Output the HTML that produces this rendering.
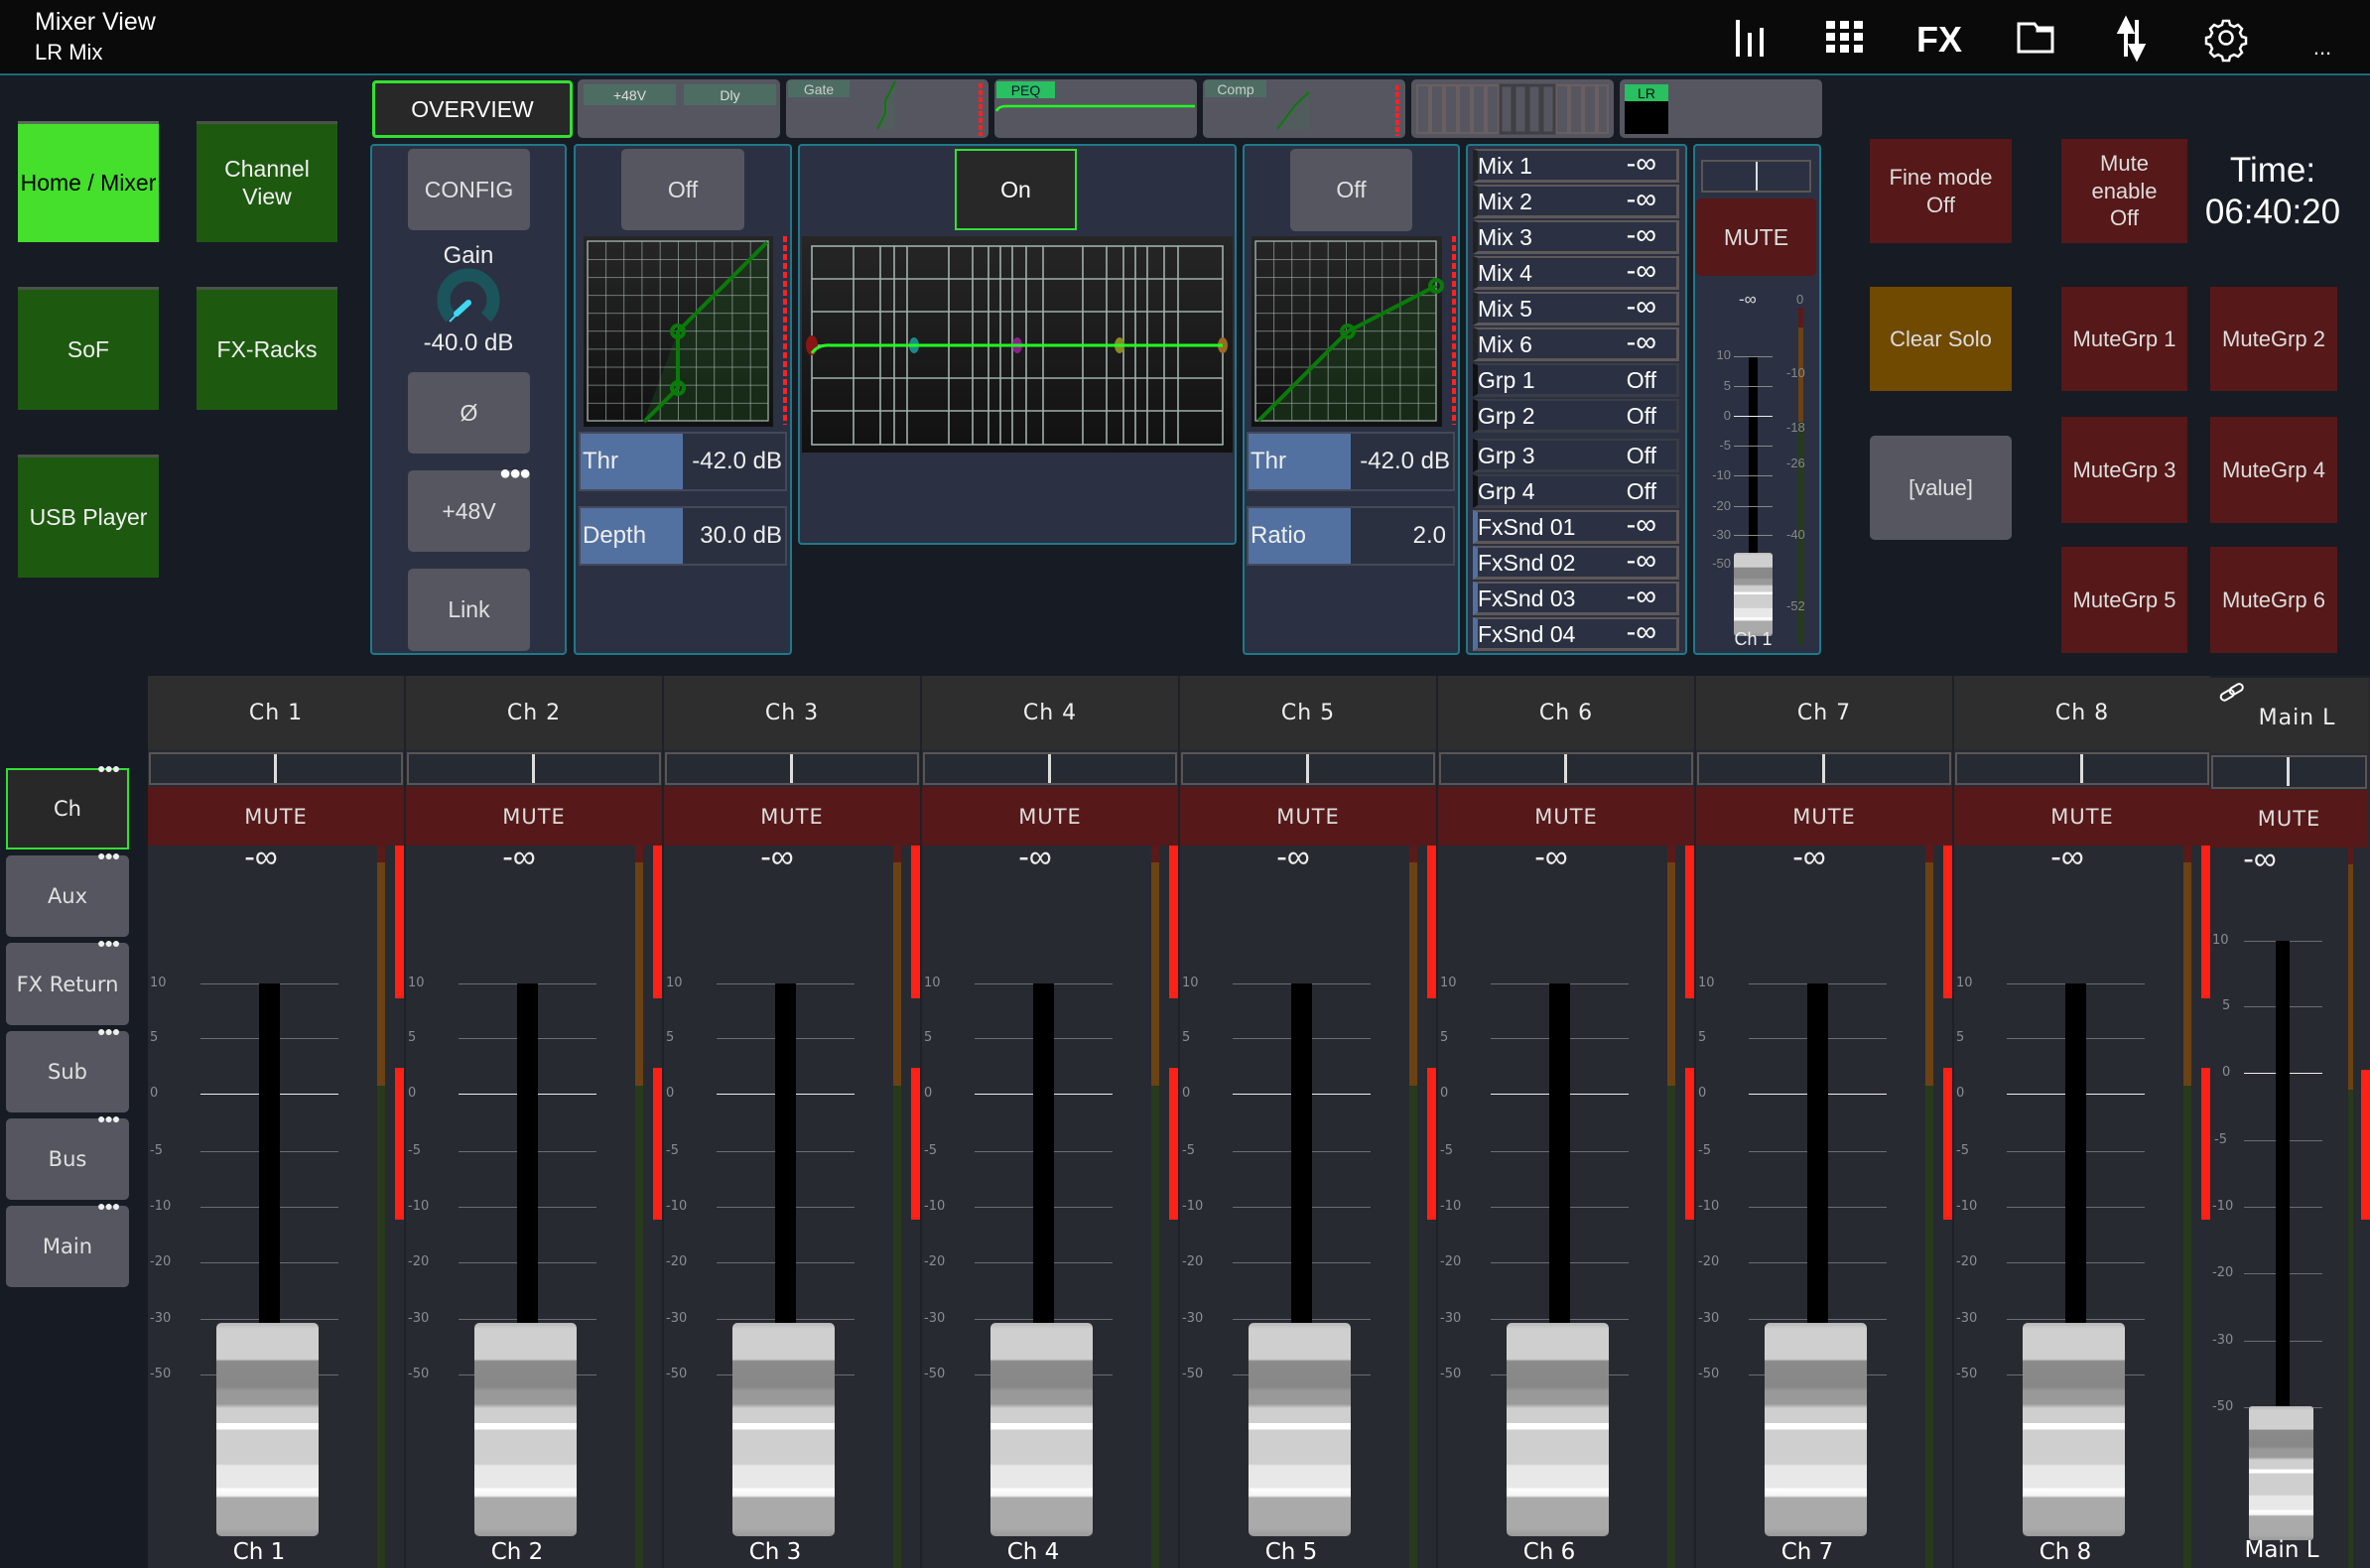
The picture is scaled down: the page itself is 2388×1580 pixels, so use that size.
<!DOCTYPE html>
<html><head><meta charset="utf-8">
<style>
*{margin:0;padding:0;box-sizing:border-box}
body{width:2388px;height:1580px;background:#171b24;overflow:hidden;position:relative;font-family:"Liberation Sans",sans-serif;color:#eee}
.a{position:absolute}
.c{display:flex;align-items:center;justify-content:center;text-align:center}
.nav{background:#1d5a10;border-top:3px solid #4a5248;font-size:23px;color:#f0f0f0;line-height:1.2}
.tile{background:#565661;border-radius:5px}
.pnl{background:#2b3142;border:2px solid #1d7a8a;border-radius:4px}
.btn{background:#565661;border-radius:5px;font-size:23px;color:#e0e0e0}
.red{background:#561818;color:#ddd;font-size:22px;line-height:1.25}
.row{left:1484px;width:208px;height:34px;border:3px solid #5e5858;border-top-width:2px;background:#2b3142;font-size:23px;color:#fff}
.row span{position:absolute;top:2px}
.row .l{left:0}.row .r{right:20px;top:-3px;font-size:29px}
.strip{position:absolute;top:681px;width:258px;height:899px;background:#272a31}
.hd{position:absolute;left:0;top:0;width:258px;height:74px;background:#2e2e2e;font-family:"DejaVu Sans",sans-serif;font-size:22px;display:flex;align-items:center;justify-content:center;letter-spacing:1px}
.pan{position:absolute;left:1px;top:77px;width:256px;height:33px;border:2px solid #5a5555;background:#262a32}
.pan i{position:absolute;left:124px;top:0;width:3px;height:29px;background:#ddd}
.mu{position:absolute;left:0;top:112px;width:258px;height:59px;background:#561818;color:#ddd;font-family:"DejaVu Sans",sans-serif;font-size:21px;letter-spacing:1px;display:flex;align-items:center;justify-content:center}
.inf{position:absolute;left:74px;top:164px;width:80px;text-align:center;font-family:"Liberation Sans",sans-serif;font-size:32px;line-height:36px;color:#eee}
.sl{position:absolute;left:53px;width:139px;height:1px;background:#6a6d74}
.sl.z{background:#eee}
.lb{position:absolute;left:2px;width:30px;font-family:"DejaVu Sans",sans-serif;font-size:13px;color:#8a8d94}
.trk{position:absolute;left:112px;top:310px;width:21px;height:344px;background:#000}
.cap{position:absolute;left:69px;top:652px;width:103px;height:215px;border-radius:5px;background:linear-gradient(#b8b8b8 0,#cfcfcf 3%,#cfcfcf 17%,#8a8a8a 18%,#888 30%,#999 32%,#999 38%,#cfcfcf 40%,#cfcfcf 47%,#fff 47%,#fff 50%,#cfcfcf 50%,#cfcfcf 66%,#e8e8e8 67%,#e8e8e8 77%,#fff 78%,#f4f4f4 81%,#aaa 82%,#aaa 96%,#999 100%)}
.nm{position:absolute;left:42px;top:870px;width:140px;text-align:center;font-family:"DejaVu Sans",sans-serif;font-size:23px;color:#fff}
.m1{position:absolute;left:231px;width:8px}
.rb{position:absolute;left:249px;width:9px;background:#ff2016}
</style></head><body>

<div class="a" style="left:0;top:0;width:2388px;height:76px;background:#0a0a0a;border-bottom:2px solid #1a6a78"></div>
<div class="a" style="left:35px;top:8px;font-size:25px;color:#fff">Mixer View</div>
<div class="a" style="left:35px;top:40px;font-size:22px;color:#fff">LR Mix</div>
<svg class="a" style="left:1740px;top:14px" width="640" height="50" viewBox="1740 14 640 50">
 <g fill="#fff">
  <rect x="1749" y="20" width="4" height="37"/><rect x="1761" y="33" width="4" height="24"/><rect x="1773" y="28" width="4" height="29"/>
  <rect x="1840" y="21" width="9" height="8"/><rect x="1854" y="21" width="9" height="8"/><rect x="1868" y="21" width="9" height="8"/>
  <rect x="1840" y="33" width="9" height="8"/><rect x="1854" y="33" width="9" height="8"/><rect x="1868" y="33" width="9" height="8"/>
  <rect x="1840" y="45" width="9" height="8"/><rect x="1854" y="45" width="9" height="8"/><rect x="1868" y="45" width="9" height="8"/>
  <text x="1954" y="52" font-family="Liberation Sans" font-weight="bold" font-size="36" text-anchor="middle">FX</text>
  <text x="2340" y="55" font-family="Liberation Sans" font-size="22" text-anchor="middle">...</text>
 </g>
 <path d="M2034 24h16l3 4h15v24h-34z M2053 28v3h15" fill="none" stroke="#fff" stroke-width="3"/>
 <path d="M2142 57V24 M2136 32l6-12 6 12z M2153 20v33 M2147 46l6 12 6-12z" stroke="#fff" stroke-width="4" fill="#fff"/>
 <g transform="translate(2243 38)" fill="none" stroke="#fff" stroke-width="2.5">
  <circle r="6.5"/>
  <path d="M-3 -17h6l1 4 4 2 4-2 4 4-2 4 2 4 4 1v6l-4 1-2 4 2 4-4 4-4-2-4 2-1 4h-6l-1-4-4-2-4 2-4-4 2-4-2-4-4-1v-6l4-1 2-4-2-4 4-4 4 2 4-2z"/>
 </g>
</svg>

<div class="a c nav" style="left:18px;top:122px;width:142px;height:122px;background:#44e02c;color:#000;border-top-color:#5a6a58">Home / Mixer</div>
<div class="a c nav" style="left:198px;top:122px;width:142px;height:122px">Channel<br>View</div>
<div class="a c nav" style="left:18px;top:289px;width:142px;height:124px">SoF</div>
<div class="a c nav" style="left:198px;top:289px;width:142px;height:124px">FX-Racks</div>
<div class="a c nav" style="left:18px;top:458px;width:142px;height:124px">USB Player</div>

<div class="a c" style="left:375px;top:81px;width:202px;height:58px;background:#282828;border:3px solid #33e033;border-radius:4px;font-size:23px;color:#fff">OVERVIEW</div>
<div class="a tile" style="left:582px;top:80px;width:204px;height:59px"></div>
<div class="a c" style="left:588px;top:85px;width:93px;height:21px;background:#4d6d63;font-size:14px;color:#ddd">+48V</div>
<div class="a c" style="left:689px;top:85px;width:93px;height:21px;background:#4d6d63;font-size:14px;color:#ddd">Dly</div>
<div class="a tile" style="left:792px;top:80px;width:204px;height:59px"></div>
<div class="a c" style="left:794px;top:81px;width:62px;height:17px;background:#4d6d63;font-size:14px;color:#ccc">Gate</div>
<svg class="a" style="left:792px;top:80px" width="204" height="59"><path d="M100 22l10-20v48h-18z" fill="#4a6a58" opacity=".4"/><path d="M92 50l8-16v-12l10-20" stroke="#0a7a0a" stroke-width="2" fill="none"/><line x1="196" y1="4" x2="196" y2="57" stroke="#f22" stroke-width="4" stroke-dasharray="5 2"/></svg>
<div class="a tile" style="left:1002px;top:80px;width:204px;height:59px"></div>
<div class="a c" style="left:1004px;top:82px;width:59px;height:17px;background:#28c060;font-size:14px;color:#113">PEQ</div>
<svg class="a" style="left:1002px;top:80px" width="204" height="59"><path d="M2 32q2-5 10-5h190" stroke="#2f2" stroke-width="2.5" fill="none"/></svg>
<div class="a tile" style="left:1212px;top:80px;width:204px;height:59px"></div>
<div class="a c" style="left:1214px;top:81px;width:62px;height:17px;background:#4d6d63;font-size:14px;color:#ccc">Comp</div>
<svg class="a" style="left:1212px;top:80px" width="204" height="59"><path d="M75 50l18-24 14-13v37h-32z" fill="#4a6a58" opacity=".4"/><path d="M75 50l18-24 14-13" stroke="#0a7a0a" stroke-width="2" fill="none"/><line x1="196" y1="6" x2="196" y2="57" stroke="#f22" stroke-width="4" stroke-dasharray="5 2"/></svg>
<div class="a tile" style="left:1422px;top:80px;width:204px;height:59px"></div>
<svg class="a" style="left:1422px;top:80px" width="204" height="59">
 <g fill="none" stroke-width="2">
 <g stroke="#6a5f5f"><rect x="6" y="6" width="12" height="48"/><rect x="20" y="6" width="12" height="48"/><rect x="34" y="6" width="12" height="48"/><rect x="48" y="6" width="12" height="48"/><rect x="62" y="6" width="12" height="48"/><rect x="76" y="6" width="12" height="48"/><rect x="146" y="6" width="12" height="48"/><rect x="160" y="6" width="12" height="48"/><rect x="174" y="6" width="12" height="48"/><rect x="188" y="6" width="10" height="48"/></g>
 <g stroke="#3f3f44" stroke-width="3"><rect x="90" y="6" width="12" height="48"/><rect x="104" y="6" width="12" height="48"/><rect x="118" y="6" width="12" height="48"/><rect x="132" y="6" width="12" height="48"/></g>
 </g></svg>
<div class="a tile" style="left:1632px;top:80px;width:204px;height:59px"></div>
<div class="a c" style="left:1637px;top:85px;width:44px;height:17px;background:#28c060;font-size:14px;color:#111">LR</div>
<div class="a" style="left:1637px;top:102px;width:44px;height:33px;background:#000"></div>

<div class="a pnl" style="left:373px;top:145px;width:198px;height:515px"></div>
<div class="a c btn" style="left:411px;top:150px;width:123px;height:82px">CONFIG</div>
<div class="a" style="left:373px;top:244px;width:198px;text-align:center;font-size:24px">Gain</div>
<svg class="a" style="left:440px;top:270px" width="64" height="64" viewBox="-32 -32 64 64"><path d="M-17.7 17.7A25 25 0 1 1 17.7 17.7" fill="none" stroke="#1c545c" stroke-width="13"/><line x1="-19" y1="22" x2="1" y2="2" stroke="#3fd8f0" stroke-width="2"/><line x1="-12" y1="14" x2="0" y2="3" stroke="#3fd8f0" stroke-width="6" stroke-linecap="round"/></svg>
<div class="a" style="left:373px;top:332px;width:198px;text-align:center;font-size:24px">-40.0 dB</div>
<div class="a c btn" style="left:411px;top:375px;width:123px;height:82px">Ø</div>
<div class="a c btn" style="left:411px;top:474px;width:123px;height:82px">+48V</div>
<div class="a" style="left:503px;top:466px;font-size:20px;color:#fff;letter-spacing:-2px">●●●</div>
<div class="a c btn" style="left:411px;top:573px;width:123px;height:83px">Link</div>

<div class="a pnl" style="left:578px;top:145px;width:220px;height:515px"></div>
<div class="a c btn" style="left:626px;top:150px;width:124px;height:82px">Off</div>
<svg class="a" style="left:588px;top:238px" width="210" height="192">
 <defs><pattern id="g1" width="18.2" height="18.1" patternUnits="userSpaceOnUse" x="4" y="5"><path d="M0 0H18.2M0 0V18.1" stroke="#9fb0aa" stroke-width="1.3" fill="none"/></pattern>
 <linearGradient id="bg1" x1="0" y1="0" x2="0" y2="1"><stop offset="0" stop-color="#262626"/><stop offset="1" stop-color="#111"/></linearGradient></defs>
 <rect width="191" height="192" fill="url(#bg1)"/>
 <path d="M95 96L185 6V186H61z" fill="#1a3a1a" opacity=".6"/>
 <rect x="4" y="5" width="182" height="181" fill="url(#g1)" stroke="#9fb0aa" stroke-width="1.3"/>
 <path d="M61 187L95 153V96L185 6" stroke="#0a7a0a" stroke-width="4" fill="none"/>
 <circle cx="95" cy="96" r="6" fill="none" stroke="#0a7a0a" stroke-width="4"/><circle cx="95" cy="153" r="6" fill="none" stroke="#0a7a0a" stroke-width="4"/>
 <line x1="203" y1="0" x2="203" y2="190" stroke="#f22" stroke-width="4" stroke-dasharray="6 3"/>
</svg>
<div class="a" style="left:583px;top:435px;width:210px;height:60px;border:2px solid #44495a;background:#2a3040"></div>
<div class="a" style="left:585px;top:437px;width:103px;height:56px;background:#5271a0;font-size:24px;padding:14px 2px">Thr</div>
<div class="a" style="left:688px;top:451px;width:100px;text-align:right;font-size:24px">-42.0 dB</div>
<div class="a" style="left:583px;top:510px;width:210px;height:60px;border:2px solid #44495a;background:#2a3040"></div>
<div class="a" style="left:585px;top:512px;width:103px;height:56px;background:#5271a0;font-size:24px;padding:14px 2px">Depth</div>
<div class="a" style="left:688px;top:526px;width:100px;text-align:right;font-size:24px">30.0 dB</div>

<div class="a pnl" style="left:804px;top:145px;width:442px;height:404px"></div>
<div class="a c" style="left:962px;top:150px;width:123px;height:82px;background:#282828;border:2px solid #33e033;font-size:23px;color:#fff">On</div>
<svg class="a" style="left:808px;top:238px" width="434" height="218">
 <defs><linearGradient id="bg2" x1="0" y1="0" x2="0" y2="1"><stop offset="0" stop-color="#262626"/><stop offset="1" stop-color="#111"/></linearGradient></defs>
 <rect width="434" height="218" fill="url(#bg2)"/>
 <g stroke="#9fb0aa" stroke-width="1.6" fill="none">
 <rect x="10" y="10" width="414" height="200"/>
 <path d="M10 43H424M10 76H424M10 110H424M10 143H424M10 176H424"/>
 <path d="M52 10V210M79 10V210M93 10V210M106 10V210M148 10V210M172 10V210M188 10V210M200 10V210M212 10V210M226 10V210M243 10V210M283 10V210M307 10V210M324 10V210M336 10V210M348 10V210M365 10V210M379 10V210"/>
 </g>
 <ellipse cx="10" cy="110" rx="6" ry="10" fill="#8a1515"/>
 <ellipse cx="113" cy="110" rx="5" ry="8" fill="#1a8a8a"/>
 <ellipse cx="217" cy="110" rx="5" ry="8" fill="#8a208a"/>
 <ellipse cx="320" cy="110" rx="5" ry="8" fill="#8a8a20"/>
 <ellipse cx="424" cy="110" rx="5" ry="8" fill="#9a6a20"/>
 <path d="M10 118Q16 109 30 110H424" stroke="#2f2" stroke-width="3" fill="none"/>
</svg>

<div class="a pnl" style="left:1252px;top:145px;width:219px;height:515px"></div>
<div class="a c btn" style="left:1300px;top:150px;width:123px;height:83px">Off</div>
<svg class="a" style="left:1261px;top:238px" width="210" height="192">
 <defs><pattern id="g2" width="18.2" height="18.1" patternUnits="userSpaceOnUse" x="4" y="5"><path d="M0 0H18.2M0 0V18.1" stroke="#9fb0aa" stroke-width="1.3" fill="none"/></pattern></defs>
 <rect width="192" height="192" fill="url(#bg1)"/>
 <path d="M97 96L186 50V186H7z" fill="#1a3a1a" opacity=".6"/>
 <rect x="4" y="5" width="182" height="181" fill="url(#g2)" stroke="#9fb0aa" stroke-width="1.3"/>
 <path d="M7 186L97 96L186 50" stroke="#0a7a0a" stroke-width="4" fill="none"/>
 <circle cx="97" cy="96" r="6" fill="none" stroke="#0a7a0a" stroke-width="4"/><circle cx="186" cy="50" r="6" fill="none" stroke="#0a7a0a" stroke-width="4"/>
 <line x1="204" y1="0" x2="204" y2="190" stroke="#f22" stroke-width="4" stroke-dasharray="6 3"/>
</svg>
<div class="a" style="left:1256px;top:435px;width:210px;height:60px;border:2px solid #44495a;background:#2a3040"></div>
<div class="a" style="left:1258px;top:437px;width:103px;height:56px;background:#5271a0;font-size:24px;padding:14px 2px">Thr</div>
<div class="a" style="left:1361px;top:451px;width:100px;text-align:right;font-size:24px">-42.0 dB</div>
<div class="a" style="left:1256px;top:510px;width:210px;height:60px;border:2px solid #44495a;background:#2a3040"></div>
<div class="a" style="left:1258px;top:512px;width:103px;height:56px;background:#5271a0;font-size:24px;padding:14px 2px">Ratio</div>
<div class="a" style="left:1361px;top:526px;width:96px;text-align:right;font-size:24px">2.0</div>

<div class="a pnl" style="left:1477px;top:145px;width:223px;height:515px"></div>
<div class="a row" style="top:150px;border-left:5px solid #222"><span class="l">Mix 1</span><span class="r">-∞</span></div>
<div class="a row" style="top:186px;border-left:5px solid #222"><span class="l">Mix 2</span><span class="r">-∞</span></div>
<div class="a row" style="top:222px;border-left:5px solid #222"><span class="l">Mix 3</span><span class="r">-∞</span></div>
<div class="a row" style="top:258px;border-left:5px solid #222"><span class="l">Mix 4</span><span class="r">-∞</span></div>
<div class="a row" style="top:294px;border-left:5px solid #222"><span class="l">Mix 5</span><span class="r">-∞</span></div>
<div class="a row" style="top:330px;border-left:5px solid #222"><span class="l">Mix 6</span><span class="r">-∞</span></div>
<div class="a row" style="top:366px;border-color:#3a3d45;border-left:5px solid #111"><span class="l">Grp 1</span><span class="r" style="font-size:23px;top:2px">Off</span></div>
<div class="a row" style="top:402px;border-color:#3a3d45;border-left:5px solid #111"><span class="l">Grp 2</span><span class="r" style="font-size:23px;top:2px">Off</span></div>
<div class="a row" style="top:442px;border-color:#3a3d45;border-left:5px solid #111"><span class="l">Grp 3</span><span class="r" style="font-size:23px;top:2px">Off</span></div>
<div class="a row" style="top:478px;border-color:#3a3d45;border-left:5px solid #111"><span class="l">Grp 4</span><span class="r" style="font-size:23px;top:2px">Off</span></div>
<div class="a row" style="top:514px;border-left:5px solid #5271a0"><span class="l">FxSnd 01</span><span class="r">-∞</span></div>
<div class="a row" style="top:550px;border-left:5px solid #5271a0"><span class="l">FxSnd 02</span><span class="r">-∞</span></div>
<div class="a row" style="top:586px;border-left:5px solid #5271a0"><span class="l">FxSnd 03</span><span class="r">-∞</span></div>
<div class="a row" style="top:622px;border-left:5px solid #5271a0"><span class="l">FxSnd 04</span><span class="r">-∞</span></div>

<div class="a pnl" style="left:1706px;top:145px;width:129px;height:515px"></div>
<div class="a" style="left:1714px;top:161px;width:111px;height:33px;border:2px solid #5a5555"></div>
<div class="a" style="left:1769px;top:163px;width:2px;height:29px;background:#ddd"></div>
<div class="a c red" style="left:1709px;top:200px;width:121px;height:78px;border-radius:5px;font-size:23px">MUTE</div>
<div class="a" style="left:1752px;top:292px;font-size:17px;color:#ddd">-∞</div>
<div class="a" style="left:1810px;top:294px;font-size:13px;color:#888">0</div>
<div class="a" style="left:1812px;top:310px;width:5px;height:20px;background:#5a1a1a"></div>
<div class="a" style="left:1812px;top:330px;width:5px;height:95px;background:#6b4214"></div>
<div class="a" style="left:1812px;top:425px;width:5px;height:225px;background:#283a1c"></div>
<div class="a" style="left:1762px;top:359px;width:9px;height:200px;background:#000"></div>
<div class="a" style="left:1720px;top:351px;font-size:13px;color:#888;line-height:1;width:24px;text-align:right">10</div>
<div class="a" style="left:1720px;top:381px;font-size:13px;color:#888;width:24px;text-align:right">5</div>
<div class="a" style="left:1720px;top:411px;font-size:13px;color:#888;width:24px;text-align:right">0</div>
<div class="a" style="left:1720px;top:441px;font-size:13px;color:#888;width:24px;text-align:right">-5</div>
<div class="a" style="left:1720px;top:471px;font-size:13px;color:#888;width:24px;text-align:right">-10</div>
<div class="a" style="left:1720px;top:502px;font-size:13px;color:#888;width:24px;text-align:right">-20</div>
<div class="a" style="left:1720px;top:531px;font-size:13px;color:#888;width:24px;text-align:right">-30</div>
<div class="a" style="left:1720px;top:560px;font-size:13px;color:#888;width:24px;text-align:right">-50</div>
<div class="a" style="left:1747px;top:359px;width:39px;height:1px;background:#888"></div>
<div class="a" style="left:1747px;top:389px;width:39px;height:1px;background:#888"></div>
<div class="a" style="left:1747px;top:419px;width:39px;height:1px;background:#eee"></div>
<div class="a" style="left:1747px;top:449px;width:39px;height:1px;background:#888"></div>
<div class="a" style="left:1747px;top:479px;width:39px;height:1px;background:#888"></div>
<div class="a" style="left:1747px;top:510px;width:39px;height:1px;background:#888"></div>
<div class="a" style="left:1747px;top:539px;width:39px;height:1px;background:#888"></div>
<div class="a" style="left:1800px;top:368px;font-size:13px;color:#888">-10</div>
<div class="a" style="left:1800px;top:423px;font-size:13px;color:#888">-18</div>
<div class="a" style="left:1800px;top:459px;font-size:13px;color:#888">-26</div>
<div class="a" style="left:1800px;top:531px;font-size:13px;color:#888">-40</div>
<div class="a" style="left:1800px;top:603px;font-size:13px;color:#888">-52</div>
<div class="a cap" style="left:1747px;top:557px;width:39px;height:84px;border-radius:3px"></div>
<div class="a" style="left:1740px;top:634px;width:53px;text-align:center;font-size:18px">Ch 1</div>

<div class="a c red" style="left:1884px;top:140px;width:143px;height:105px">Fine mode<br>Off</div>
<div class="a c red" style="left:2077px;top:140px;width:127px;height:105px">Mute<br>enable<br>Off</div>
<div class="a" style="left:2210px;top:152px;width:160px;text-align:center;font-size:35px;color:#fff">Time:</div>
<div class="a" style="left:2210px;top:194px;width:160px;text-align:center;font-size:35px;color:#fff">06:40:20</div>
<div class="a c red" style="left:1884px;top:289px;width:143px;height:105px;background:#704a00">Clear Solo</div>
<div class="a c red" style="left:2077px;top:289px;width:127px;height:105px">MuteGrp 1</div>
<div class="a c red" style="left:2227px;top:289px;width:128px;height:105px">MuteGrp 2</div>
<div class="a c btn" style="left:1884px;top:439px;width:143px;height:105px;font-size:22px">[value]</div>
<div class="a c red" style="left:2077px;top:420px;width:127px;height:107px">MuteGrp 3</div>
<div class="a c red" style="left:2227px;top:420px;width:128px;height:107px">MuteGrp 4</div>
<div class="a c red" style="left:2077px;top:551px;width:127px;height:107px">MuteGrp 5</div>
<div class="a c red" style="left:2227px;top:551px;width:128px;height:107px">MuteGrp 6</div>

<div class="a c" style="left:6px;top:774px;width:124px;height:82px;background:#282828;border:2px solid #33e033;font-family:'DejaVu Sans',sans-serif;font-size:21px">Ch</div>
<div class="a c btn" style="left:6px;top:862px;width:124px;height:82px;font-family:'DejaVu Sans',sans-serif;font-size:21px">Aux</div>
<div class="a c btn" style="left:6px;top:950px;width:124px;height:83px;font-family:'DejaVu Sans',sans-serif;font-size:21px">FX Return</div>
<div class="a c btn" style="left:6px;top:1039px;width:124px;height:82px;font-family:'DejaVu Sans',sans-serif;font-size:21px">Sub</div>
<div class="a c btn" style="left:6px;top:1127px;width:124px;height:82px;font-family:'DejaVu Sans',sans-serif;font-size:21px">Bus</div>
<div class="a c btn" style="left:6px;top:1215px;width:124px;height:82px;font-family:'DejaVu Sans',sans-serif;font-size:21px">Main</div>
<div class="a" style="left:98px;top:766px;font-size:14px;letter-spacing:-1px">●●●</div>
<div class="a" style="left:98px;top:854px;font-size:14px;letter-spacing:-1px">●●●</div>
<div class="a" style="left:98px;top:942px;font-size:14px;letter-spacing:-1px">●●●</div>
<div class="a" style="left:98px;top:1031px;font-size:14px;letter-spacing:-1px">●●●</div>
<div class="a" style="left:98px;top:1119px;font-size:14px;letter-spacing:-1px">●●●</div>
<div class="a" style="left:98px;top:1207px;font-size:14px;letter-spacing:-1px">●●●</div>

<div class="a" style="left:149px;top:681px;width:2239px;height:899px;background:#1e2127"></div>

<div class="strip" style="left:149px"><div class="hd">Ch 1</div><div class="pan"><i></i></div><div class="mu">MUTE</div><div class="inf">-∞</div>
<div class="sl" style="top:310px"></div><div class="sl" style="top:365px"></div><div class="sl z" style="top:421px"></div><div class="sl" style="top:479px"></div><div class="sl" style="top:535px"></div><div class="sl" style="top:591px"></div><div class="sl" style="top:648px"></div><div class="sl" style="top:704px"></div>
<div class="lb" style="top:302px">10</div><div class="lb" style="top:357px">5</div><div class="lb" style="top:413px">0</div><div class="lb" style="top:471px">-5</div><div class="lb" style="top:527px">-10</div><div class="lb" style="top:583px">-20</div><div class="lb" style="top:640px">-30</div><div class="lb" style="top:696px">-50</div>
<div class="trk"></div><div class="cap"></div><div class="nm">Ch 1</div>
<div class="m1" style="top:171px;height:17px;background:#5a1a1a"></div><div class="m1" style="top:188px;height:225px;background:#6b4214"></div><div class="m1" style="top:413px;height:486px;background:#283a1c"></div>
<div class="rb" style="top:171px;height:154px"></div><div class="rb" style="top:395px;height:153px"></div></div>

<div class="strip" style="left:409px"><div class="hd">Ch 2</div><div class="pan"><i></i></div><div class="mu">MUTE</div><div class="inf">-∞</div>
<div class="sl" style="top:310px"></div><div class="sl" style="top:365px"></div><div class="sl z" style="top:421px"></div><div class="sl" style="top:479px"></div><div class="sl" style="top:535px"></div><div class="sl" style="top:591px"></div><div class="sl" style="top:648px"></div><div class="sl" style="top:704px"></div>
<div class="lb" style="top:302px">10</div><div class="lb" style="top:357px">5</div><div class="lb" style="top:413px">0</div><div class="lb" style="top:471px">-5</div><div class="lb" style="top:527px">-10</div><div class="lb" style="top:583px">-20</div><div class="lb" style="top:640px">-30</div><div class="lb" style="top:696px">-50</div>
<div class="trk"></div><div class="cap"></div><div class="nm">Ch 2</div>
<div class="m1" style="top:171px;height:17px;background:#5a1a1a"></div><div class="m1" style="top:188px;height:225px;background:#6b4214"></div><div class="m1" style="top:413px;height:486px;background:#283a1c"></div>
<div class="rb" style="top:171px;height:154px"></div><div class="rb" style="top:395px;height:153px"></div></div>

<div class="strip" style="left:669px"><div class="hd">Ch 3</div><div class="pan"><i></i></div><div class="mu">MUTE</div><div class="inf">-∞</div>
<div class="sl" style="top:310px"></div><div class="sl" style="top:365px"></div><div class="sl z" style="top:421px"></div><div class="sl" style="top:479px"></div><div class="sl" style="top:535px"></div><div class="sl" style="top:591px"></div><div class="sl" style="top:648px"></div><div class="sl" style="top:704px"></div>
<div class="lb" style="top:302px">10</div><div class="lb" style="top:357px">5</div><div class="lb" style="top:413px">0</div><div class="lb" style="top:471px">-5</div><div class="lb" style="top:527px">-10</div><div class="lb" style="top:583px">-20</div><div class="lb" style="top:640px">-30</div><div class="lb" style="top:696px">-50</div>
<div class="trk"></div><div class="cap"></div><div class="nm">Ch 3</div>
<div class="m1" style="top:171px;height:17px;background:#5a1a1a"></div><div class="m1" style="top:188px;height:225px;background:#6b4214"></div><div class="m1" style="top:413px;height:486px;background:#283a1c"></div>
<div class="rb" style="top:171px;height:154px"></div><div class="rb" style="top:395px;height:153px"></div></div>

<div class="strip" style="left:929px"><div class="hd">Ch 4</div><div class="pan"><i></i></div><div class="mu">MUTE</div><div class="inf">-∞</div>
<div class="sl" style="top:310px"></div><div class="sl" style="top:365px"></div><div class="sl z" style="top:421px"></div><div class="sl" style="top:479px"></div><div class="sl" style="top:535px"></div><div class="sl" style="top:591px"></div><div class="sl" style="top:648px"></div><div class="sl" style="top:704px"></div>
<div class="lb" style="top:302px">10</div><div class="lb" style="top:357px">5</div><div class="lb" style="top:413px">0</div><div class="lb" style="top:471px">-5</div><div class="lb" style="top:527px">-10</div><div class="lb" style="top:583px">-20</div><div class="lb" style="top:640px">-30</div><div class="lb" style="top:696px">-50</div>
<div class="trk"></div><div class="cap"></div><div class="nm">Ch 4</div>
<div class="m1" style="top:171px;height:17px;background:#5a1a1a"></div><div class="m1" style="top:188px;height:225px;background:#6b4214"></div><div class="m1" style="top:413px;height:486px;background:#283a1c"></div>
<div class="rb" style="top:171px;height:154px"></div><div class="rb" style="top:395px;height:153px"></div></div>

<div class="strip" style="left:1189px"><div class="hd">Ch 5</div><div class="pan"><i></i></div><div class="mu">MUTE</div><div class="inf">-∞</div>
<div class="sl" style="top:310px"></div><div class="sl" style="top:365px"></div><div class="sl z" style="top:421px"></div><div class="sl" style="top:479px"></div><div class="sl" style="top:535px"></div><div class="sl" style="top:591px"></div><div class="sl" style="top:648px"></div><div class="sl" style="top:704px"></div>
<div class="lb" style="top:302px">10</div><div class="lb" style="top:357px">5</div><div class="lb" style="top:413px">0</div><div class="lb" style="top:471px">-5</div><div class="lb" style="top:527px">-10</div><div class="lb" style="top:583px">-20</div><div class="lb" style="top:640px">-30</div><div class="lb" style="top:696px">-50</div>
<div class="trk"></div><div class="cap"></div><div class="nm">Ch 5</div>
<div class="m1" style="top:171px;height:17px;background:#5a1a1a"></div><div class="m1" style="top:188px;height:225px;background:#6b4214"></div><div class="m1" style="top:413px;height:486px;background:#283a1c"></div>
<div class="rb" style="top:171px;height:154px"></div><div class="rb" style="top:395px;height:153px"></div></div>

<div class="strip" style="left:1449px"><div class="hd">Ch 6</div><div class="pan"><i></i></div><div class="mu">MUTE</div><div class="inf">-∞</div>
<div class="sl" style="top:310px"></div><div class="sl" style="top:365px"></div><div class="sl z" style="top:421px"></div><div class="sl" style="top:479px"></div><div class="sl" style="top:535px"></div><div class="sl" style="top:591px"></div><div class="sl" style="top:648px"></div><div class="sl" style="top:704px"></div>
<div class="lb" style="top:302px">10</div><div class="lb" style="top:357px">5</div><div class="lb" style="top:413px">0</div><div class="lb" style="top:471px">-5</div><div class="lb" style="top:527px">-10</div><div class="lb" style="top:583px">-20</div><div class="lb" style="top:640px">-30</div><div class="lb" style="top:696px">-50</div>
<div class="trk"></div><div class="cap"></div><div class="nm">Ch 6</div>
<div class="m1" style="top:171px;height:17px;background:#5a1a1a"></div><div class="m1" style="top:188px;height:225px;background:#6b4214"></div><div class="m1" style="top:413px;height:486px;background:#283a1c"></div>
<div class="rb" style="top:171px;height:154px"></div><div class="rb" style="top:395px;height:153px"></div></div>

<div class="strip" style="left:1709px"><div class="hd">Ch 7</div><div class="pan"><i></i></div><div class="mu">MUTE</div><div class="inf">-∞</div>
<div class="sl" style="top:310px"></div><div class="sl" style="top:365px"></div><div class="sl z" style="top:421px"></div><div class="sl" style="top:479px"></div><div class="sl" style="top:535px"></div><div class="sl" style="top:591px"></div><div class="sl" style="top:648px"></div><div class="sl" style="top:704px"></div>
<div class="lb" style="top:302px">10</div><div class="lb" style="top:357px">5</div><div class="lb" style="top:413px">0</div><div class="lb" style="top:471px">-5</div><div class="lb" style="top:527px">-10</div><div class="lb" style="top:583px">-20</div><div class="lb" style="top:640px">-30</div><div class="lb" style="top:696px">-50</div>
<div class="trk"></div><div class="cap"></div><div class="nm">Ch 7</div>
<div class="m1" style="top:171px;height:17px;background:#5a1a1a"></div><div class="m1" style="top:188px;height:225px;background:#6b4214"></div><div class="m1" style="top:413px;height:486px;background:#283a1c"></div>
<div class="rb" style="top:171px;height:154px"></div><div class="rb" style="top:395px;height:153px"></div></div>

<div class="strip" style="left:1969px"><div class="hd">Ch 8</div><div class="pan"><i></i></div><div class="mu">MUTE</div><div class="inf">-∞</div>
<div class="sl" style="top:310px"></div><div class="sl" style="top:365px"></div><div class="sl z" style="top:421px"></div><div class="sl" style="top:479px"></div><div class="sl" style="top:535px"></div><div class="sl" style="top:591px"></div><div class="sl" style="top:648px"></div><div class="sl" style="top:704px"></div>
<div class="lb" style="top:302px">10</div><div class="lb" style="top:357px">5</div><div class="lb" style="top:413px">0</div><div class="lb" style="top:471px">-5</div><div class="lb" style="top:527px">-10</div><div class="lb" style="top:583px">-20</div><div class="lb" style="top:640px">-30</div><div class="lb" style="top:696px">-50</div>
<div class="trk"></div><div class="cap"></div><div class="nm">Ch 8</div>
<div class="m1" style="top:171px;height:17px;background:#5a1a1a"></div><div class="m1" style="top:188px;height:225px;background:#6b4214"></div><div class="m1" style="top:413px;height:486px;background:#283a1c"></div>
<div class="rb" style="top:171px;height:154px"></div><div class="rb" style="top:395px;height:153px"></div></div>

<div class="strip" style="left:2227px;top:683px;width:161px;height:897px">
<div class="hd" style="width:159px;height:76px;padding-top:4px;padding-left:16px">Main L</div>
<svg class="a" style="left:9px;top:3px" width="26" height="24"><g fill="none" stroke="#fff" stroke-width="2"><rect x="1" y="11" width="14" height="7" rx="3.5" transform="rotate(-30 8 14)"/><rect x="10" y="5" width="14" height="7" rx="3.5" transform="rotate(-30 17 8)"/></g></svg>
<div class="pan" style="width:157px;top:78px;height:34px"><i style="left:74px"></i></div>
<div class="mu" style="width:159px;top:113px;height:58px">MUTE</div>
<div class="inf" style="left:10px;top:164px">-∞</div>
<div class="sl" style="left:34px;width:79px;top:265px"></div><div class="sl" style="left:34px;width:79px;top:331px"></div><div class="sl z" style="left:34px;width:79px;top:398px"></div><div class="sl" style="left:34px;width:79px;top:466px"></div><div class="sl" style="left:34px;width:79px;top:533px"></div><div class="sl" style="left:34px;width:79px;top:600px"></div><div class="sl" style="left:34px;width:79px;top:668px"></div><div class="sl" style="left:34px;width:79px;top:735px"></div>
<div class="lb" style="top:257px">10</div><div class="lb" style="top:323px;left:12px">5</div><div class="lb" style="top:390px;left:12px">0</div><div class="lb" style="top:458px;left:4px">-5</div><div class="lb" style="top:525px">-10</div><div class="lb" style="top:592px">-20</div><div class="lb" style="top:660px">-30</div><div class="lb" style="top:727px">-50</div>
<div class="trk" style="left:66px;top:265px;width:14px;height:470px"></div>
<div class="cap" style="left:39px;top:734px;width:65px;height:135px;border-radius:3px"></div>
<div class="nm" style="left:0;width:144px;top:866px">Main L</div>
<div class="m1" style="left:139px;width:5px;top:171px;height:17px;background:#5a1a1a"></div><div class="m1" style="left:139px;width:5px;top:188px;height:227px;background:#6b4214"></div><div class="m1" style="left:139px;width:5px;top:415px;height:482px;background:#283a1c"></div>
<div class="rb" style="left:152px;width:9px;top:395px;height:151px"></div>
</div>

</body></html>
